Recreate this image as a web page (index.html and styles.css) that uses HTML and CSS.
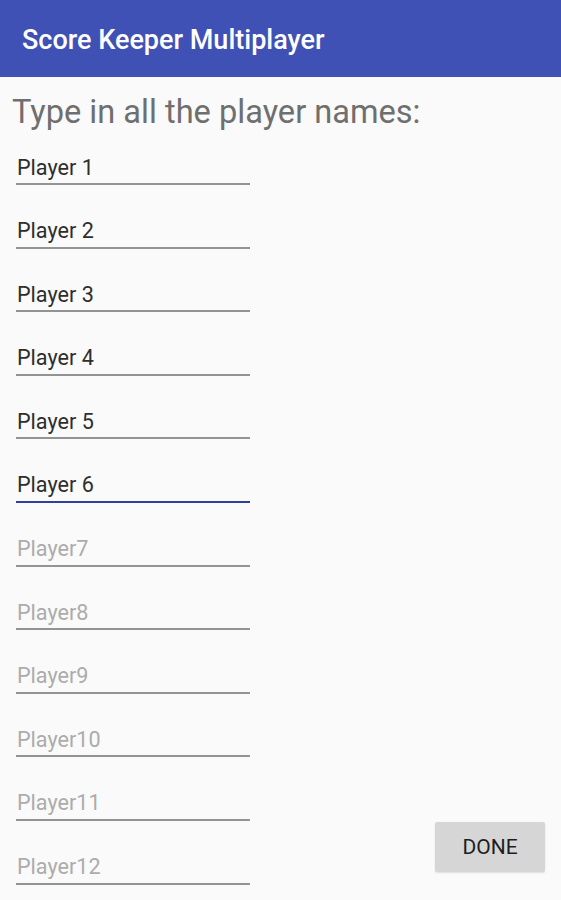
FILE: index.html
```html
<!DOCTYPE html>
<html>
<head>
<meta charset="utf-8">
<link rel="stylesheet" href="styles.css">
</head>
<body>
<header class="appbar">
  <h1 class="title">Score Keeper Multiplayer</h1>
</header>
<main class="content">
  <section class="form">
    <p class="prompt">Type in all the player names:</p>
    <div class="fields">
      <input class="field" value="Player 1">
      <input class="field" value="Player 2">
      <input class="field" value="Player 3">
      <input class="field" value="Player 4">
      <input class="field" value="Player 5">
      <input class="field focused" value="Player 6">
      <input class="field" placeholder="Player7">
      <input class="field" placeholder="Player8">
      <input class="field" placeholder="Player9">
      <input class="field" placeholder="Player10">
      <input class="field" placeholder="Player11">
      <input class="field" placeholder="Player12">
    </div>
  </section>
  <button class="done">DONE</button>
</main>
</body>
</html>
```
FILE: styles.css
```css
html, body {
  margin: 0;
  padding: 0;
  background: #fafafa;
  font-family: Roboto, "Liberation Sans", sans-serif;
  overflow: hidden;
}
.appbar {
  height: 77px;
  background: #3f51b5;
  display: flex;
  align-items: center;
  padding-left: 22px;
  box-sizing: border-box;
}
.title {
  margin: 0;
  padding-top: 2px;
  color: #fff;
  font-size: 27px;
  font-weight: 500;
}
.content {
  height: 823px;
  display: flex;
  justify-content: space-between;
}
.form {
  display: flex;
  flex-direction: column;
}
.prompt {
  margin: 0;
  padding: 16px 0 0 12px;
  font-size: 32.6px;
  line-height: 38px;
  color: #6f6f6f;
}
.fields {
  display: flex;
  flex-direction: column;
  gap: 23.6px;
  margin: 14px 0 0 16px;
}
.field {
  width: 234px;
  height: 40px;
  box-sizing: border-box;
  padding: 6px 1px 0 1px;
  border: none;
  border-bottom: 2px solid #939393;
  background: transparent;
  font-family: Roboto, "Liberation Sans", sans-serif;
  font-size: 21.6px;
  color: #2e2e2e;
  outline: none;
}
.field::placeholder {
  color: #acacac;
}
.field.focused {
  border-bottom-color: #303f9f;
}
.done {
  align-self: flex-end;
  margin: 0 16px 28px 0;
  width: 110px;
  height: 50px;
  border: none;
  border-radius: 2px;
  background: #d6d6d6;
  color: #1e1e1e;
  font-family: Roboto, "Liberation Sans", sans-serif;
  font-size: 21px;
  font-weight: 400;
  box-shadow: 0 1px 2px rgba(0,0,0,0.12);
}
```
